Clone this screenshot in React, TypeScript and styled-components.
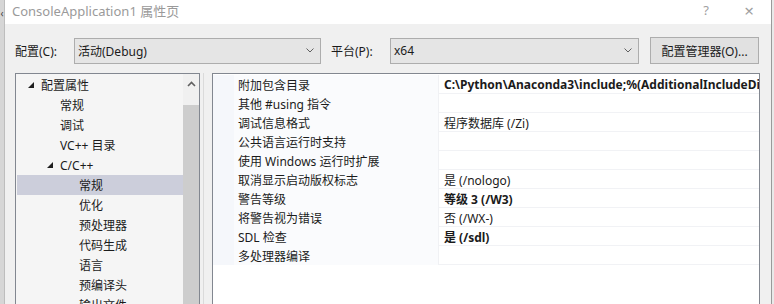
import React from "react";
import styled, { createGlobalStyle } from "styled-components";

const Global = createGlobalStyle`
  html, body { margin: 0; padding: 0; background: #f0f0f0; overflow: hidden; }
  body { font-family: "Noto Sans", "Noto Sans CJK SC", sans-serif; font-size: 12px; color: #1b1b1b; }
`;

const Screen = styled.div`
  width: 774px;
  height: 304px;
  display: flex;
  overflow: hidden;
`;

const BackStrip = styled.div`
  width: 4px;
  background: #d6d6d6;
  border-right: 1px solid #bdbdbd;
  display: flex;
  flex-direction: column;
  align-items: center;
  font-size: 10px;
  color: #444;
  line-height: 26px;
  overflow: hidden;
`;

const Dialog = styled.div`
  width: 766px;
  display: flex;
  flex-direction: column;
  background: #f0f0f0;
  border-right: 1px solid #9a9a9a;
`;

const RightEdge = styled.div`
  flex: 1;
  background: #e9e9e9;
`;

const TitleBar = styled.div`
  height: 24px;
  background: #ffffff;
  display: flex;
  align-items: center;
  padding-left: 7px;
  color: #9a9a9a;
  font-size: 13px;
`;

const Title = styled.span`
  flex: 1;
  margin-top: -3px;
`;

const TitleBtn = styled.span<{ $w: number; $big?: boolean }>`
  width: ${(p) => p.$w}px;
  text-align: center;
  color: #a0a0a0;
  font-size: ${(p) => (p.$big ? 17 : 13)}px;
  margin-top: -4px;
`;

const Toolbar = styled.div`
  display: flex;
  align-items: center;
  padding: 13px 0 9px 10px;
`;

const Label = styled.span<{ $w: number; $gap?: number }>`
  width: ${(p) => p.$w}px;
  margin-left: ${(p) => p.$gap ?? 0}px;
  flex-shrink: 0;
`;

const Combo = styled.div<{ $w: number }>`
  width: ${(p) => p.$w}px;
  height: 26px;
  box-sizing: border-box;
  border: 1px solid #adadad;
  background: #e5e5e5;
  display: flex;
  align-items: center;
  padding: 0 6px 0 3px;
  flex-shrink: 0;
`;

const ComboText = styled.span`
  flex: 1;
`;

const Chevron = () => (
  <svg width="8" height="5" viewBox="0 0 8 5">
    <path d="M0.5 0.5 L4 4 L7.5 0.5" fill="none" stroke="#606060" strokeWidth="1" />
  </svg>
);

const Button = styled.div`
  width: 109px;
  height: 27px;
  box-sizing: border-box;
  border: 1px solid #adadad;
  background: #e1e1e1;
  display: flex;
  align-items: center;
  justify-content: center;
  margin-left: 11px;
`;

const Body = styled.div`
  flex: 1;
  display: flex;
  padding-left: 10px;
  min-height: 0;
`;

const TreePanel = styled.div`
  width: 185px;
  box-sizing: border-box;
  border: 1px solid #828790;
  border-bottom: none;
  background: #f5f5f5;
  display: flex;
`;

const TreeList = styled.div`
  flex: 1;
  padding-top: 1px;
  overflow: hidden;
`;

const TreeRow = styled.div<{ $level: number; $selected?: boolean }>`
  height: 20px;
  display: flex;
  align-items: center;
  padding-left: ${(p) => 24 + p.$level * 19}px;
  margin-left: 1px;
  background: ${(p) => (p.$selected ? "#cccedb" : "transparent")};
  white-space: nowrap;
  position: relative;
`;

const Expander = styled.span`
  position: absolute;
  margin-left: -13px;
  display: flex;
  align-items: center;
`;

const Scrollbar = styled.div`
  width: 16px;
  background: #f0f0f0;
  display: flex;
  flex-direction: column;
`;

const ScrollArrow = styled.div`
  height: 31px;
  display: flex;
  justify-content: center;
  padding-top: 7px;
  box-sizing: border-box;
`;

const ScrollThumb = styled.div`
  flex: 1;
  background: #cdcdcd;
`;

const Splitter = styled.div`
  width: 12px;
  display: flex;
  justify-content: center;
`;

const SplitLine = styled.div`
  width: 1px;
  background: #dadada;
  margin-left: -6px;
`;

const Grid = styled.div`
  width: 548px;
  box-sizing: border-box;
  border: 1px solid #828790;
  border-bottom: none;
  background: #ffffff;
  padding-top: 1px;
  overflow: hidden;
`;

const PropRow = styled.div`
  height: 19px;
  display: grid;
  grid-template-columns: 21px 205px 1fr;
  box-shadow: inset 0 -1px 0 #f1f2f5;
`;

const Gutter = styled.div`
  background: #f5f7fb;
`;

const NameCell = styled.div`
  display: flex;
  align-items: center;
  padding-left: 4px;
  background: #fafbfd;
  white-space: nowrap;
  border-right: 1px solid #f0f1f4;
`;

const ValueCell = styled.div<{ $bold?: boolean }>`
  display: flex;
  align-items: center;
  padding-left: 5px;
  white-space: nowrap;
  overflow: hidden;
  font-weight: ${(p) => (p.$bold ? 700 : 400)};
`;

const Triangle = () => (
  <svg width="6" height="6" viewBox="0 0 6 6">
    <polygon points="6,0 6,6 0,6" fill="#1e1e1e" />
  </svg>
);

const tree: { label: string; level: number; expander?: boolean; selected?: boolean }[] = [
  { label: "配置属性", level: 0, expander: true },
  { label: "常规", level: 1 },
  { label: "调试", level: 1 },
  { label: "VC++ 目录", level: 1 },
  { label: "C/C++", level: 1, expander: true },
  { label: "常规", level: 2, selected: true },
  { label: "优化", level: 2 },
  { label: "预处理器", level: 2 },
  { label: "代码生成", level: 2 },
  { label: "语言", level: 2 },
  { label: "预编译头", level: 2 },
  { label: "输出文件", level: 2 },
];

const props: { name: string; value: string; bold?: boolean }[] = [
  { name: "附加包含目录", value: "C:\\Python\\Anaconda3\\include;%(AdditionalIncludeDirectories)", bold: true },
  { name: "其他 #using 指令", value: "" },
  { name: "调试信息格式", value: "程序数据库 (/Zi)" },
  { name: "公共语言运行时支持", value: "" },
  { name: "使用 Windows 运行时扩展", value: "" },
  { name: "取消显示启动版权标志", value: "是 (/nologo)" },
  { name: "警告等级", value: "等级 3 (/W3)", bold: true },
  { name: "将警告视为错误", value: "否 (/WX-)" },
  { name: "SDL 检查", value: "是 (/sdl)", bold: true },
  { name: "多处理器编译", value: "" },
];

export default function App() {
  return (
    <>
      <Global />
      <Screen>
        <BackStrip>‹</BackStrip>
        <Dialog>
          <TitleBar>
            <Title>ConsoleApplication1 属性页</Title>
            <TitleBtn $w={42}>?</TitleBtn>
            <TitleBtn $w={44} $big>×</TitleBtn>
          </TitleBar>
          <Toolbar>
            <Label $w={59}>配置(C):</Label>
            <Combo $w={247}>
              <ComboText>活动(Debug)</ComboText>
              <Chevron />
            </Combo>
            <Label $w={59} $gap={10}>平台(P):</Label>
            <Combo $w={249}>
              <ComboText>x64</ComboText>
              <Chevron />
            </Combo>
            <Button>配置管理器(O)...</Button>
          </Toolbar>
          <Body>
            <TreePanel>
              <TreeList>
                {tree.map((t, i) => (
                  <TreeRow key={i} $level={t.level} $selected={t.selected}>
                    {t.expander && (
                      <Expander>
                        <Triangle />
                      </Expander>
                    )}
                    {t.label}
                  </TreeRow>
                ))}
              </TreeList>
              <Scrollbar>
                <ScrollArrow>
                  <svg width="9" height="6" viewBox="0 0 9 6">
                    <path d="M1 5 L4.5 1.5 L8 5" fill="none" stroke="#606060" strokeWidth="1.6" />
                  </svg>
                </ScrollArrow>
                <ScrollThumb />
              </Scrollbar>
            </TreePanel>
            <Splitter>
              <SplitLine />
            </Splitter>
            <Grid>
              {props.map((p, i) => (
                <PropRow key={i}>
                  <Gutter />
                  <NameCell>{p.name}</NameCell>
                  <ValueCell $bold={p.bold}>{p.value}</ValueCell>
                </PropRow>
              ))}
            </Grid>
          </Body>
        </Dialog>
        <RightEdge />
      </Screen>
    </>
  );
}
